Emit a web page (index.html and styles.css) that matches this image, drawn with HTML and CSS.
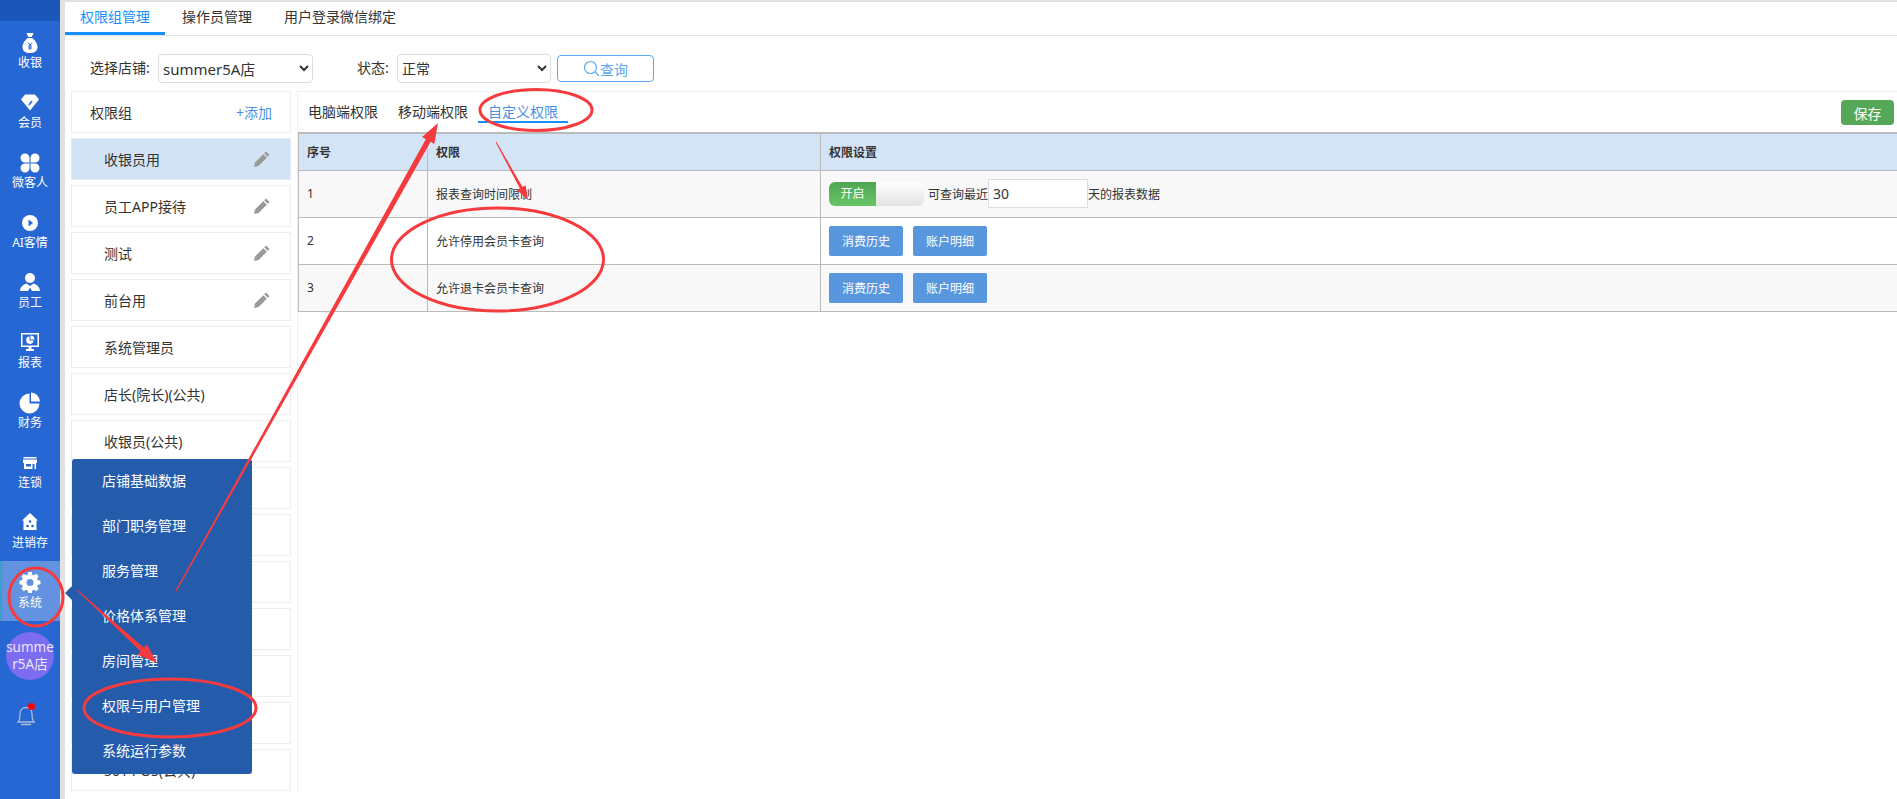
FILE: index.html
```html
<!DOCTYPE html>
<html lang="en">

<head>
    <meta charset="UTF-8">
    <meta name="viewport" content="width=device-width, initial-scale=1.0">
    <title>权限与用户管理</title>
    <link rel="stylesheet" href="styles.css">
</head>

<body>
    <div class="page">
        <!-- Left navigation -->
        <nav class="sidebar">
            <div class="sidebar-top"></div>
            <a class="nav-item">
                <svg class="nav-icon" viewBox="0 0 24 24"><path fill="#fff" d="M8.5 2h7l-1.7 4h-3.6zM10 7h4c3 2 5.500 5.500 5.500 9 0 4-3 6-7.500 6s-7.500-2-7.500-6c0-3.500 2.500-7 5.500-9z"/><path fill="none" stroke="#2767d3" d="M10 11.500l2 2.500 2-2.500M12 14v5M10 15h4M10 17h4"/></svg>
                <span>收银</span>
            </a>
            <a class="nav-item">
                <svg class="nav-icon" viewBox="0 0 24 24"><path fill="#fff" d="M7 3.500h10l4 5-9 11-9-11z"/><path fill="none" stroke="#2767d3" stroke-width="1.5" d="M11 14l3-4"/></svg>
                <span>会员</span>
            </a>
            <a class="nav-item">
                <svg class="nav-icon" viewBox="0 0 24 24"><path fill="#fff" d="M11.500 11.500H7A4.500 4.500 0 1 1 11.500 7zM12.500 11.500V7A4.500 4.500 0 1 1 17 11.500zM11.500 12.500V17A4.500 4.500 0 1 1 7 12.500zM12.500 12.500H17A4.500 4.500 0 1 1 12.500 17z"/></svg>
                <span>微客人</span>
            </a>
            <a class="nav-item">
                <svg class="nav-icon" viewBox="0 0 24 24"><circle cx="12" cy="12" r="8" fill="#fff"/><path fill="#2767d3" d="M10.500 8.500l4.500 3.500-4.500 3.500z"/></svg>
                <span>AI客情</span>
            </a>
            <a class="nav-item">
                <svg class="nav-icon" viewBox="0 0 24 24"><circle cx="12" cy="7" r="5" fill="#fff"/><path fill="#fff" d="M8.500 12.500C5 13.500 2.500 15.500 2 20h8l2-3.500 2 3.500h8c-.5-4.500-3-6.500-6.500-7.500L12 15z"/></svg>
                <span>员工</span>
            </a>
            <a class="nav-item">
                <svg class="nav-icon" viewBox="0 0 24 24"><path fill="#fff" fill-rule="evenodd" d="M3 2h18v14h-7.500v2H16v2H8v-2h2.500v-2H3zM4.500 3.500v11h15v-11z"/><path fill="#fff" d="M12.500 4.500v4h4a4 4 0 0 0-4-4zM11.500 5.500a3.700 3.700 0 1 0 4 4h-4z"/></svg>
                <span>报表</span>
            </a>
            <a class="nav-item">
                <svg class="nav-icon" viewBox="0 0 24 24"><path fill="#fff" d="M13 1.500a9.500 9.500 0 0 1 9 9h-9zM11.500 2.500v10h10a10 10 0 1 1-10-10z"/></svg>
                <span>财务</span>
            </a>
            <a class="nav-item">
                <svg class="nav-icon" viewBox="0 0 24 24"><path fill="#fff" fill-rule="evenodd" d="M5.500 6h13v1.500h-13zM5 8.500h14V12h-1v6H6v-6H5zM8 13v2.500h5V13zM14.500 13v5h2v-5z"/></svg>
                <span>连锁</span>
            </a>
            <a class="nav-item">
                <svg class="nav-icon" viewBox="0 0 24 24"><path fill="#fff" d="M12 2l8 7.500h-1.500V19h-13V9.500H4z"/><g fill="#2767d3"><circle cx="12" cy="10.500" r="1.300"/><circle cx="9.500" cy="15" r="1.300"/><circle cx="14.500" cy="15" r="1.300"/></g></svg>
                <span>进销存</span>
            </a>
            <a class="nav-item nav-item-active">
                <svg class="nav-icon" viewBox="0 0 24 24"><path transform="translate(1.5 1) scale(.875)" fill="#fff" fill-rule="evenodd" d="M10 0h4l.6 3 1.900.8 2.600-1.700 2.800 2.800-1.700 2.600.8 1.900 3 .6v4l-3 .6-.8 1.900 1.700 2.600-2.800 2.800-2.600-1.700-1.900.8-.6 3h-4l-.6-3-1.900-.8-2.600 1.700-2.800-2.800 1.700-2.600-.8-1.900-3-.6v-4l3-.6.8-1.900-1.700-2.600 2.800-2.800 2.600 1.700 1.900-.8zM12 8a4 4 0 1 0 0 8 4 4 0 0 0 0-8z"/></svg>
                <span>系统</span>
            </a>
            <div class="avatar">summe<br>r5A店</div>
            <div class="bell">
                <svg width="20" height="26" viewBox="0 0 20 26"><path fill="none" stroke="#a9bcd8" stroke-width="1.3" d="M2 19c2-2 2-4 2-8 0-4 2.500-6.500 6-6.500s6 2.500 6 6.500c0 4 0 6 2 8zM5 21.500h10"/></svg>
                <span class="bell-dot"></span>
            </div>
        </nav>

        <main class="main">
            <div class="tabs">
                <a class="tab tab-active">权限组管理</a>
                <a class="tab">操作员管理</a>
                <a class="tab">用户登录微信绑定</a>
            </div>

            <div class="filters">
                <label class="filter-label">选择店铺:</label>
                <select class="filter-select shop-select"><option>summer5A店</option></select>
                <label class="filter-label status-label">状态:</label>
                <select class="filter-select status-select"><option>正常</option></select>
                <button class="search-btn">
                    <svg width="17" height="17" viewBox="0 0 17 17"><circle cx="7.500" cy="7.500" r="6" fill="none" stroke="#5aa9f5" stroke-width="1.2"/><path stroke="#5aa9f5" stroke-width="1.2" d="M12 12l4 4"/></svg>
                    查询
                </button>
            </div>

            <div class="content">
                <!-- Permission groups -->
                <aside class="groups">
                    <div class="group-head">
                        <span>权限组</span>
                        <a class="group-add">+添加</a>
                    </div>
                    <div class="group-item group-item-active"><span>收银员用</span><svg class="pencil" viewBox="0 0 16 16"><use href="#pencil"/></svg></div>
                    <div class="group-item"><span>员工APP接待</span><svg class="pencil" viewBox="0 0 16 16"><use href="#pencil"/></svg></div>
                    <div class="group-item"><span>测试</span><svg class="pencil" viewBox="0 0 16 16"><use href="#pencil"/></svg></div>
                    <div class="group-item"><span>前台用</span><svg class="pencil" viewBox="0 0 16 16"><use href="#pencil"/></svg></div>
                    <div class="group-item"><span>系统管理员</span></div>
                    <div class="group-item"><span>店长(院长)(公共)</span></div>
                    <div class="group-item"><span>收银员(公共)</span></div>
                    <div class="group-item"></div>
                    <div class="group-item"></div>
                    <div class="group-item"></div>
                    <div class="group-item"></div>
                    <div class="group-item"></div>
                    <div class="group-item"></div>
                    <div class="group-item"><span>501 POS(公共)</span></div>
                </aside>

                <!-- Permission settings -->
                <section class="panel">
                    <div class="panel-head">
                        <a class="sub-tab">电脑端权限</a>
                        <a class="sub-tab">移动端权限</a>
                        <a class="sub-tab sub-tab-active">自定义权限</a>
                        <button class="save-btn">保存</button>
                    </div>
                    <table class="perm-table">
                        <thead>
                            <tr>
                                <th class="col-no">序号</th>
                                <th class="col-name">权限</th>
                                <th>权限设置</th>
                            </tr>
                        </thead>
                        <tbody>
                            <tr>
                                <td>1</td>
                                <td>报表查询时间限制</td>
                                <td>
                                    <div class="setting">
                                        <div class="switch"><span class="switch-on">开启</span><span class="switch-off"></span></div>
                                        <span>可查询最近</span>
                                        <input class="days-input" type="text" value="30">
                                        <span>天的报表数据</span>
                                    </div>
                                </td>
                            </tr>
                            <tr>
                                <td>2</td>
                                <td>允许停用会员卡查询</td>
                                <td><button class="blue-btn">消费历史</button><button class="blue-btn">账户明细</button></td>
                            </tr>
                            <tr>
                                <td>3</td>
                                <td>允许退卡会员卡查询</td>
                                <td><button class="blue-btn">消费历史</button><button class="blue-btn">账户明细</button></td>
                            </tr>
                        </tbody>
                    </table>
                </section>
            </div>
        </main>
    </div>

    <!-- Flyout for the system menu -->
    <div class="flyout">
        <a>店铺基础数据</a>
        <a>部门职务管理</a>
        <a>服务管理</a>
        <a>价格体系管理</a>
        <a>房间管理</a>
        <a>权限与用户管理</a>
        <a>系统运行参数</a>
    </div>

    <!-- Red marks drawn over the screenshot -->
    <svg class="marks" width="1897" height="799" viewBox="0 0 1897 799">
        <defs>
            <path id="pencil" fill="#999" d="M12 .5l3.500 3.500-1.800 1.800-3.500-3.500zM9.300 3.200l3.500 3.500-8.300 8.300L0 16l1-4.500z"/>
        </defs>
        <g fill="none" stroke="#f63b3f" stroke-width="3">
            <ellipse cx="36" cy="597" rx="27" ry="29"/>
            <ellipse cx="170" cy="708" rx="86" ry="29"/>
            <ellipse cx="536" cy="110" rx="56" ry="20.5"/>
            <ellipse cx="497.5" cy="259.5" rx="106" ry="51.5"/>
        </g>
        <g fill="#f63b3f">
            <polygon points="175.4,590.7 425.8,139.2 422.1,137.1 438,123 434.3,143.9 430.6,141.8 176.6,591.3"/>
            <polygon points="76.7,590.3 140.5,651.3 137.5,654.7 157,663 146.9,644.3 143.9,647.7 77.3,589.7"/>
            <polygon points="495.6,142.2 519.9,188.4 516.8,190.1 528,200 525.6,185.3 522.5,187 496.4,141.8"/>
        </g>
    </svg>
</body>

</html>
```

FILE: styles.css
```css
* {
    box-sizing: border-box;
}

html,
body {
    margin: 0;
    height: 100%;
    overflow: hidden;
}

body {
    font-family: "Noto Sans", "Noto Sans CJK SC", sans-serif;
    font-size: 14px;
    color: #333;
    background-color: #fff;
}

.page {
    display: flex;
    height: 799px;
    position: relative;
}

/* Left navigation */
.sidebar {
    width: 60px;
    flex-shrink: 0;
    background-color: #2767d3;
    color: #fff;
    display: flex;
    flex-direction: column;
    align-items: center;
}

.sidebar-top {
    width: 100%;
    height: 21px;
    background-color: #1b57b8;
}

.nav-item {
    width: 100%;
    height: 60px;
    display: flex;
    flex-direction: column;
    align-items: center;
    padding-top: 10px;
    font-size: 12px;
    line-height: 17px;
}

.nav-icon {
    width: 24px;
    height: 24px;
    flex-shrink: 0;
    margin-bottom: -1px;
}

.nav-item-active {
    background-color: #6393e0;
    border-left: 2px solid #3a9fc9;
    padding-right: 2px;
}

.avatar {
    width: 48px;
    height: 48px;
    margin-top: 11px;
    border-radius: 50%;
    background-color: #7b6cf0;
    color: #e8e6ff;
    font-size: 13.5px;
    line-height: 17px;
    padding-top: 7px;
    text-align: center;
    white-space: nowrap;
}

.bell {
    position: relative;
    width: 20px;
    height: 26px;
    margin-top: 23px;
    margin-right: 8px;
}

.bell-dot {
    position: absolute;
    top: 0;
    right: 1px;
    width: 7px;
    height: 7px;
    border-radius: 50%;
    background-color: #f00;
}

/* Main area */
.main {
    flex: 1;
    min-width: 0;
    border-left: 5px solid #e1e1e1;
    border-top: 2px solid #e1e1e1;
}

.tabs {
    display: flex;
    height: 34px;
    border-bottom: 1px solid #e6e6e6;
}

.tab {
    height: 33px;
    line-height: 30px;
    padding: 0 15px;
    margin-right: 2px;
    font-size: 14px;
}

.tab-active {
    color: #1890ff;
    border-bottom: 3px solid #1890ff;
}

.filters {
    display: flex;
    align-items: center;
    height: 55px;
    padding: 10px 0 0 25px;
}

.filter-label {
    margin-right: 4px;
    margin-top: -3px;
    width: 64px;
}

.status-label {
    width: 36px;
    margin-left: 44px;
}

.filter-select {
    height: 29px;
    border: 1px solid #ddd;
    border-radius: 4px;
    background-color: #fff;
    color: #333;
    font-family: inherit;
    font-size: 14px;
}

.shop-select {
    width: 155px;
    font-size: 15px;
}

.status-select {
    width: 154px;
}

.search-btn {
    width: 97px;
    height: 27px;
    margin-left: 6px;
    border: 1px solid #5aa9f5;
    border-radius: 4px;
    background-color: #fff;
    color: #5aa9f5;
    font-family: inherit;
    font-size: 14px;
    display: flex;
    align-items: center;
    justify-content: center;
    padding: 0;
}

.content {
    display: flex;
    padding-left: 6px;
}

/* Permission groups */
.groups {
    width: 220px;
    flex-shrink: 0;
    display: flex;
    flex-direction: column;
    gap: 5px;
}

.group-head {
    height: 42px;
    border: 1px solid #eee;
    display: flex;
    align-items: center;
    justify-content: space-between;
    padding: 0 18px;
}

.group-add {
    color: #4a90e2;
}

.group-item {
    height: 42px;
    flex-shrink: 0;
    border: 1px solid #eee;
    display: flex;
    align-items: center;
    justify-content: space-between;
    padding: 0 20px 0 32px;
}

.group-item-active {
    background-color: #d3e3f6;
    border-color: #e3edf9;
}

.pencil {
    width: 16px;
    height: 16px;
}

/* Permission settings */
.panel {
    flex: 1;
    min-width: 0;
    margin-left: 6px;
    border-left: 1px solid #eee;
    border-top: 1px solid #eee;
}

.panel-head {
    height: 40px;
    display: flex;
    align-items: flex-start;
    padding-left: 10px;
}

.sub-tab {
    width: 70px;
    margin-right: 20px;
    height: 32px;
    line-height: 40px;
    text-align: center;
    font-size: 14px;
}

.sub-tab:nth-child(2) {
    margin-right: 10px;
}

.sub-tab-active {
    width: 90px;
    height: 31px;
    color: #4a90e2;
    border-bottom: 2px solid #1890ff;
}

.save-btn {
    width: 53px;
    height: 25px;
    margin: 8px 3px 0 auto;
    border: none;
    border-radius: 4px;
    background-color: #55a858;
    color: #fff;
    font-family: inherit;
    font-size: 14px;
    padding: 0;
}

.perm-table {
    width: 100%;
    border-collapse: collapse;
    table-layout: fixed;
    font-size: 12px;
    border-top: 2px solid #bbb;
    border-left: 1px solid #bbb;
}

.perm-table th,
.perm-table td {
    border-bottom: 1px solid #bbb;
    border-right: 1px solid #bbb;
    text-align: left;
    padding: 0 8px;
}

.perm-table th {
    height: 37px;
    background-color: #d3e4f6;
    font-weight: 600;
}

.perm-table th:last-child,
.perm-table td:last-child {
    border-right: none;
}

.perm-table td {
    height: 47px;
}

.perm-table tbody tr:nth-child(odd) {
    background-color: #f8f8f8;
}

.col-no {
    width: 129px;
}

.col-name {
    width: 393px;
}

.setting {
    display: flex;
    align-items: center;
}

.switch {
    display: flex;
    width: 95px;
    height: 24px;
    border-radius: 6px;
    overflow: hidden;
    margin-right: 4px;
}

.switch-on {
    width: 47px;
    background: linear-gradient(#4fa653, #66c566);
    color: #fff;
    text-align: center;
    line-height: 24px;
}

.switch-off {
    flex: 1;
    background: linear-gradient(#fff, #e2e2e2);
}

.days-input {
    width: 100px;
    height: 29px;
    border: 1px solid #ddd;
    margin: 0;
    padding: 0 4px;
    font-family: inherit;
    font-size: 14px;
    color: #333;
}

.blue-btn {
    width: 74px;
    height: 30px;
    margin-right: 10px;
    border: none;
    border-radius: 2px;
    background-color: #5897de;
    color: #fff;
    font-family: inherit;
    font-size: 12px;
    padding: 0;
    vertical-align: middle;
}

/* Flyout menu */
.flyout {
    position: absolute;
    left: 72px;
    top: 459px;
    width: 180px;
    height: 315px;
    background-color: #255bab;
    border-radius: 3px;
    color: #fff;
    z-index: 5;
}

.flyout::before {
    content: "";
    position: absolute;
    left: -7px;
    top: 127px;
    border-top: 7px solid transparent;
    border-bottom: 7px solid transparent;
    border-right: 7px solid #255bab;
}

.flyout a {
    display: block;
    height: 45px;
    line-height: 43px;
    padding-left: 30px;
    font-size: 14px;
}

/* Red marks */
.marks {
    position: absolute;
    left: 0;
    top: 0;
    z-index: 10;
    pointer-events: none;
}
```
